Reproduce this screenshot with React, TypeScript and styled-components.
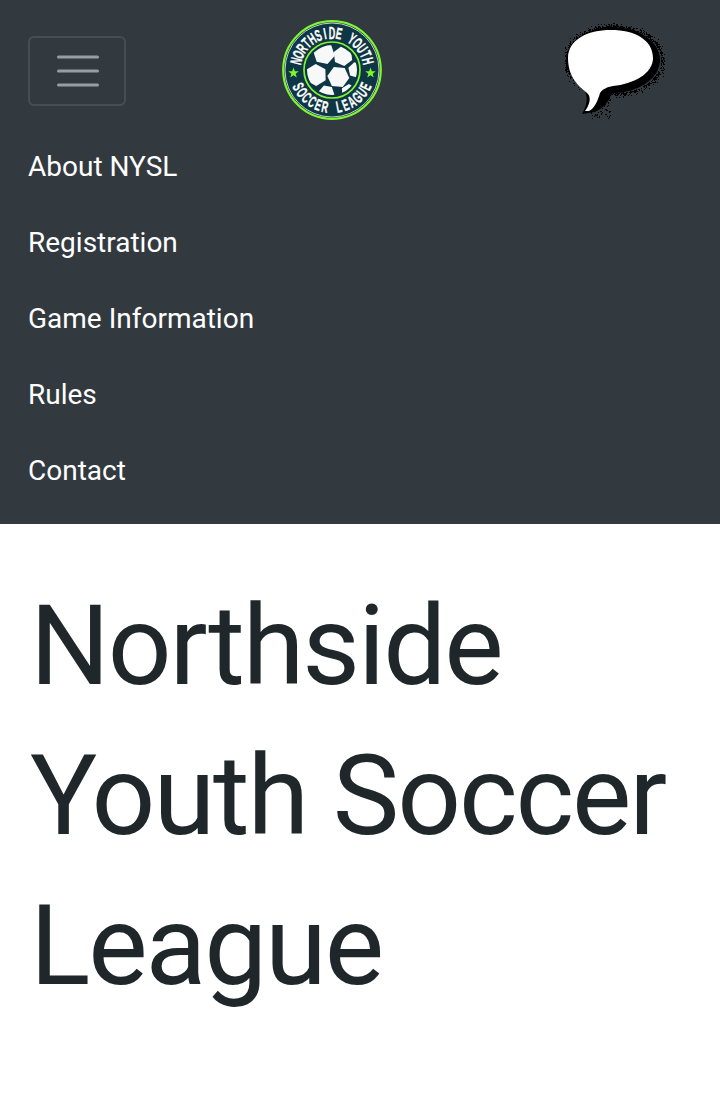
import React from "react";
import styled, { createGlobalStyle } from "styled-components";

const Global = createGlobalStyle`
  html, body { margin: 0; padding: 0; background: #fff; }
  body { font-family: Roboto, "Liberation Sans", sans-serif; color: #212529; }
`;

const Page = styled.div`
  width: 720px;
  min-height: 1116px;
  overflow: hidden;
`;

const Navbar = styled.nav`
  background: #333a3f;
  padding: 20px 28px 15px;
`;

const TopRow = styled.div`
  display: flex;
  align-items: center;
  justify-content: space-between;
  height: 100px;
  margin-bottom: 9px;
`;

const Toggler = styled.button`
  box-sizing: border-box;
  width: 98px;
  height: 70px;
  margin-top: 2px;
  background: transparent;
  border: 2px solid rgba(255, 255, 255, 0.1);
  border-radius: 6px;
  padding: 0;
  display: flex;
  align-items: center;
  justify-content: center;
`;

const LogoSlot = styled.a`
  display: block;
  width: 100px;
  height: 100px;
  margin-left: 156px;
`;

const BubbleSlot = styled.a`
  display: block;
  width: 100px;
  height: 100px;
  margin-left: auto;
  margin-right: 27px;
`;

const NavList = styled.ul`
  list-style: none;
  margin: 0;
  padding: 0;
`;

const NavLink = styled.a`
  display: block;
  height: 76px;
  line-height: 76px;
  font-size: 28px;
  font-weight: 400;
  color: #fff;
  text-decoration: none;
`;

const Main = styled.main`
  padding: 47px 30px 0;
`;

const Title = styled.h1`
  margin: 0;
  font-size: 112px;
  font-weight: 400;
  letter-spacing: -2.1px;
  line-height: 150px;
  color: #20272a;
`;

const Burger = () => (
  <svg width="44" height="44" viewBox="0 0 44 44" aria-hidden="true">
    <path
      d="M3.5 8h39M3.5 22h39M3.5 36h39"
      stroke="rgba(255,255,255,0.5)"
      strokeWidth="3"
      strokeLinecap="round"
      fill="none"
    />
  </svg>
);

const hexPoints = (cx: number, cy: number, r: number, rot: number, n: number) =>
  Array.from({ length: n }, (_, i) => {
    const a = rot + (i * Math.PI * 2) / n;
    return `${(cx + r * Math.cos(a)).toFixed(2)},${(cy + r * Math.sin(a)).toFixed(2)}`;
  }).join(" ");

const starPoints = (cx: number, cy: number, r: number) =>
  Array.from({ length: 10 }, (_, i) => {
    const a = -Math.PI / 2 + (i * Math.PI) / 5;
    const rr = i % 2 ? r * 0.42 : r;
    return `${(cx + rr * Math.cos(a)).toFixed(2)},${(cy + rr * Math.sin(a)).toFixed(2)}`;
  }).join(" ");

type ArcProps = { text: string; from: number; to: number; radius: number; flip?: boolean };

const ArcText = ({ text, from, to, radius, flip }: ArcProps) => {
  const chars = text.split("");
  const step = (to - from) / (chars.length - 1);
  return (
    <g
      fontFamily='"Liberation Sans",sans-serif'
      fontWeight="700"
      fontSize="16"
      fill="#fff"
      stroke="#fff"
      strokeWidth="0.35"
      textAnchor="middle"
    >
      {chars.map((c, i) => {
        const deg = from + step * i;
        const a = (deg * Math.PI) / 180;
        const x = 50 + radius * Math.cos(a);
        const y = 50 + radius * Math.sin(a);
        const rot = flip ? deg - 90 : deg + 90;
        return (
          <text key={i} transform={`translate(${x.toFixed(2)} ${y.toFixed(2)}) rotate(${rot.toFixed(1)}) scale(0.56 1)`}>
            {c}
          </text>
        );
      })}
    </g>
  );
};

const Logo = () => (
  <svg width="100" height="100" viewBox="0 0 100 100" role="img" aria-label="Northside Youth Soccer League">
    <defs>
      <clipPath id="ballClip">
        <circle cx="50" cy="50" r="25" />
      </clipPath>
    </defs>
    <circle cx="50" cy="50" r="50" fill="#0f3644" />
    <circle cx="50" cy="50" r="48.8" fill="none" stroke="#7ef52e" strokeWidth="2.2" />
    <circle cx="50" cy="50" r="47" fill="none" stroke="#eef6e6" strokeWidth="0.8" />
    <circle cx="50" cy="50" r="28" fill="none" stroke="#7ef52e" strokeWidth="1.7" />
    <circle cx="50" cy="50" r="25.5" fill="#0f3644" />
    <g clipPath="url(#ballClip)" fill="#f7f8f8">
      <polygon points={hexPoints(42, 33.5, 11, 0.2, 6)} />
      <polygon points={hexPoints(61, 36, 10, 0.4, 6)} />
      <polygon points={hexPoints(56.3, 57, 11, 0.1, 6)} />
      <polygon points={hexPoints(34, 55, 11, 0.5, 6)} />
      <polygon points={hexPoints(74, 50, 8, 0.3, 6)} />
      <polygon points={hexPoints(44.5, 73, 8, 0.2, 6)} />
      <polygon points={hexPoints(67, 72, 8, 0.5, 6)} />
    </g>
    <ArcText text="NORTHSIDE YOUTH" from={-166} to={-14} radius={31.5} />
    <ArcText text="SOCCER LEAGUE" from={154} to={26} radius={43} flip />
    <polygon points={starPoints(11.5, 53, 5.5)} fill="#7ef52e" />
    <polygon points={starPoints(88.5, 53, 5.5)} fill="#7ef52e" />
  </svg>
);

const speckles = (() => {
  let s = 12345;
  const rnd = () => {
    s = (s * 1664525 + 1013904223) >>> 0;
    return s / 4294967296;
  };
  const dots: { x: number; y: number }[] = [];
  for (let i = 0; i < 900; i++) {
    const a = rnd() * Math.PI * 2;
    const d = 1 + rnd() * rnd() * 0.16;
    const x = 48 + 47 * d * Math.cos(a) + 1;
    const y = 40 + 33 * d * Math.sin(a);
    dots.push({ x: Math.round(x), y: Math.round(y) });
  }
  for (let i = 0; i < 90; i++) {
    dots.push({ x: Math.round(22 + rnd() * 24), y: Math.round(78 + rnd() * 20) });
  }
  return dots;
})();

const Bubble = () => (
  <svg width="100" height="100" viewBox="0 0 100 100" role="img" aria-label="Chat">
    <g fill="#000">
      {speckles.map((d, i) => (
        <rect key={i} x={d.x} y={d.y} width="1" height="1" />
      ))}
    </g>
    <ellipse cx="48" cy="40" rx="47" ry="33" fill="#000" />
    <path d="M14 62C22 72 25 80 17 94L30 92C38 88 44 82 46 74L62 70Z" fill="#000" />
    <path
      d="M3 38C3 20 22 10 46 10C70 10 88 20 88 38C88 54 68 64 48 66C42 67 38 69 35 73C33 80 30 88 24 91L20 91C25 84 26 78 23 74C20 70 3 62 3 38Z"
      fill="#fff"
    />
  </svg>
);

const links = ["About NYSL", "Registration", "Game Information", "Rules", "Contact"];

export default function App() {
  return (
    <Page>
      <Global />
      <Navbar>
        <TopRow>
          <Toggler aria-label="Toggle navigation">
            <Burger />
          </Toggler>
          <LogoSlot>
            <Logo />
          </LogoSlot>
          <BubbleSlot>
            <Bubble />
          </BubbleSlot>
        </TopRow>
        <NavList>
          {links.map((l) => (
            <li key={l}>
              <NavLink href="#">{l}</NavLink>
            </li>
          ))}
        </NavList>
      </Navbar>
      <Main>
        <Title>Northside Youth Soccer League</Title>
      </Main>
    </Page>
  );
}
